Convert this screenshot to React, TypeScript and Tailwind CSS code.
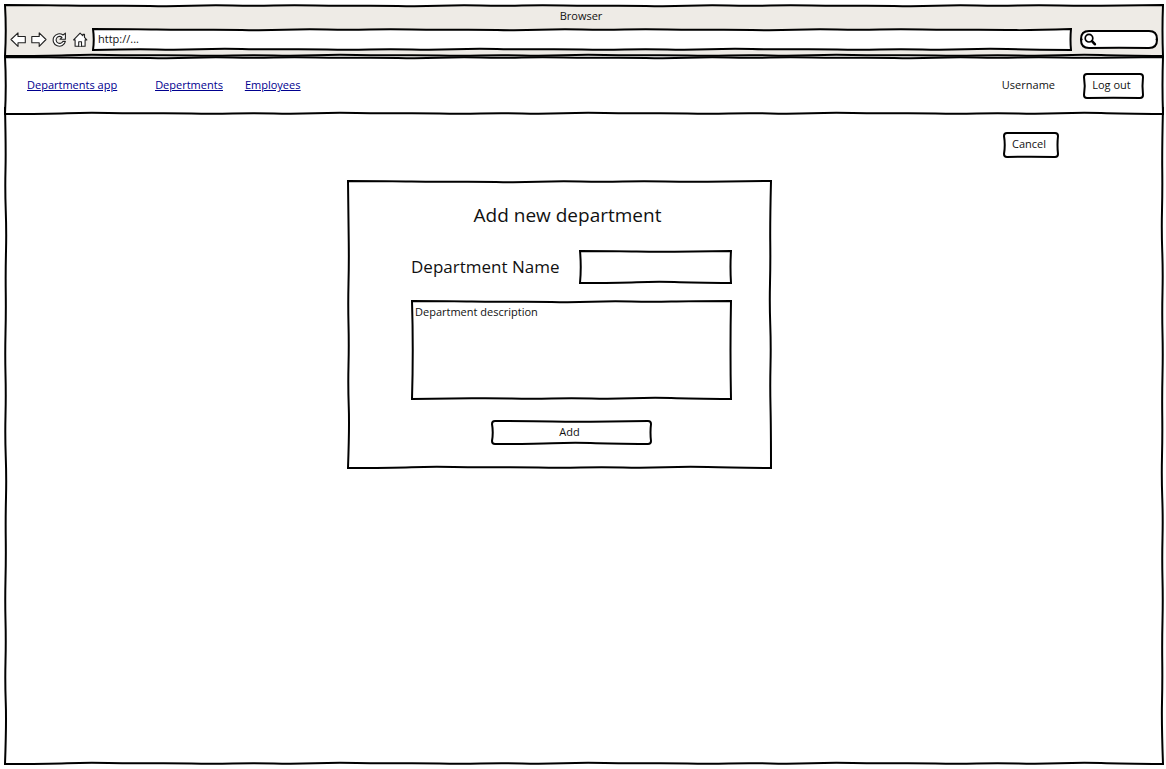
import { useLayoutEffect, useRef, useState, type ReactNode } from "react";

type Point = [number, number];

const WOBBLE = [1, 0, 1, 0.5, 1.5, 0];

/** Points of one hand-drawn edge; offsets always lean towards the inside. */
function edge(from: Point, to: Point, inward: Point, phase: number): Point[] {
  const length = Math.hypot(to[0] - from[0], to[1] - from[1]);
  const count = Math.max(2, Math.round(length / 42));
  const points: Point[] = [from];
  for (let i = 1; i < count; i++) {
    const t = i / count;
    const d = WOBBLE[(i + phase) % WOBBLE.length];
    points.push([
      from[0] + (to[0] - from[0]) * t + inward[0] * d,
      from[1] + (to[1] - from[1]) * t + inward[1] * d,
    ]);
  }
  points.push(to);
  return points;
}

function smooth(points: Point[]): string {
  let d = "";
  for (let i = 1; i < points.length - 1; i++) {
    const [x, y] = points[i];
    const next = points[i + 1];
    const last = i === points.length - 2;
    const ex = last ? next[0] : (x + next[0]) / 2;
    const ey = last ? next[1] : (y + next[1]) / 2;
    d += `Q${x} ${y} ${ex} ${ey}`;
  }
  return d;
}

function sketchPath(w: number, h: number, r: number): string {
  const a = 1;
  const right = w - 1;
  const bottom = h - 1;
  const top = edge([a + r, a], [right - r, a], [0, 1], 0);
  const east = edge([right, a + r], [right, bottom - r], [-1, 0], 1);
  const south = edge([right - r, bottom], [a + r, bottom], [0, -1], 2);
  const west = edge([a, bottom - r], [a, a + r], [1, 0], 3);
  return (
    `M${a + r} ${a}` +
    smooth(top) +
    `Q${right} ${a} ${right} ${a + r}` +
    smooth(east) +
    `Q${right} ${bottom} ${right - r} ${bottom}` +
    smooth(south) +
    `Q${a} ${bottom} ${a} ${bottom - r}` +
    smooth(west) +
    `Q${a} ${a} ${a + r} ${a}Z`
  );
}

function Outline({ radius = 0, fill = "none" }: { radius?: number; fill?: string }) {
  const ref = useRef<SVGSVGElement>(null);
  const [size, setSize] = useState({ w: 0, h: 0 });
  useLayoutEffect(() => {
    const node = ref.current;
    if (!node) return;
    const measure = () => {
      const box = node.getBoundingClientRect();
      setSize({ w: box.width, h: box.height });
    };
    measure();
    const observer = new ResizeObserver(measure);
    observer.observe(node);
    return () => observer.disconnect();
  }, []);
  return (
    <svg ref={ref} aria-hidden="true" className="pointer-events-none absolute inset-0 -z-10 size-full">
      {size.w > 0 && (
        <path d={sketchPath(size.w, size.h, radius)} fill={fill} stroke="#000" strokeWidth="2" strokeLinejoin="miter" />
      )}
    </svg>
  );
}

function SketchButton({ children, className }: { children: ReactNode; className: string }) {
  return (
    <button type="button" className={`relative isolate cursor-pointer text-[11px] ${className}`}>
      <Outline radius={3} fill="#fff" />
      {children}
    </button>
  );
}

function ToolIcon({ label, children }: { label: string; children: ReactNode }) {
  return (
    <button type="button" aria-label={label} className="size-4 cursor-pointer">
      <svg
        viewBox="0 0 16 16"
        className="size-4"
        fill="#fff"
        stroke="#222"
        strokeWidth="1.1"
        strokeLinejoin="round"
        strokeLinecap="round"
        aria-hidden="true"
      >
        {children}
      </svg>
    </button>
  );
}

function BrowserBar() {
  return (
    <header className="relative isolate pb-1.5">
      <Outline fill="#eeebe6" />
      <div className="h-6 pr-1.5 text-center text-[11px] leading-6">Browser</div>
      <div className="flex items-center pr-1.5 pl-1.5">
        <div className="flex gap-[5px] pr-[3px]">
          <ToolIcon label="Back">
            <path d="M1 7.5 8 0.8V4.5H15.3V10.8H8V14.4Z" />
          </ToolIcon>
          <ToolIcon label="Forward">
            <path d="M15 7.5 8.2 0.8V4.5H0.8V10.8H8.2V14.4Z" />
          </ToolIcon>
          <ToolIcon label="Reload">
            <path d="M11 3 13.4 1.2V7.3H8L10 5.3A3.5 3.5 0 1 0 10.8 9.4H13.4A6.2 6.2 0 1 1 11 3Z" />
          </ToolIcon>
          <ToolIcon label="Home">
            <path d="M2.1 7.9V14.2H12.1V7.9H13.8L11.5 5.4V2.4H9.9V3.8L7.1 1.1 0.6 7.9Z" />
            <path d="M5.7 14.2V9.8H8.5V14.2" />
          </ToolIcon>
        </div>
        <div className="relative isolate flex h-[23px] flex-1">
          <Outline fill="#fff" />
          <input
            aria-label="Address"
            defaultValue="http://..."
            className="min-w-0 flex-1 bg-transparent px-1.5 text-[11px] outline-none"
          />
        </div>
        <label className="relative isolate ml-2 flex h-[19px] w-[78px] items-center pl-1">
          <Outline radius={8} fill="#fff" />
          <svg viewBox="0 0 13 13" className="size-[13px] shrink-0" fill="none" stroke="#000" aria-hidden="true">
            <circle cx="5" cy="5.2" r="3.8" strokeWidth="1.7" />
            <path d="M8 8.2 10.8 11.2" strokeWidth="2.6" strokeLinecap="round" />
          </svg>
          <input aria-label="Search" className="min-w-0 flex-1 bg-transparent text-[11px] outline-none" />
        </label>
      </div>
    </header>
  );
}

function NavBar() {
  return (
    <nav className="relative isolate z-10 -mt-px flex h-[59px] items-center pr-5 pl-[23px] text-[11px]">
      <Outline fill="#fff" />
      <div className="flex flex-1 items-center text-[#00008f] underline">
        <a href="#app" className="mr-[38px]">Departments app</a>
        <a href="#departments" className="mr-[22px]">Depertments</a>
        <a href="#employees">Employees</a>
      </div>
      <span className="mr-7">Username</span>
      <SketchButton className="h-[26px] w-[61px] pr-1">Log out</SketchButton>
    </nav>
  );
}

function DepartmentForm() {
  return (
    <form className="relative isolate w-[425px] pt-5 pr-10 pb-6 pl-16">
      <Outline fill="#fff" />
      <h1 className="pr-2 text-center text-[19px] leading-[30px]">Add new department</h1>
      <div className="mt-5 flex items-center justify-between">
        <label htmlFor="department-name" className="text-[17px] leading-7">
          Department Name
        </label>
        <div className="relative isolate flex h-[34px] w-[153px]">
          <Outline fill="#fff" />
          <input id="department-name" className="min-w-0 flex-1 bg-transparent px-2 text-sm outline-none" />
        </div>
      </div>
      <div className="relative isolate mt-4 flex h-[100px]">
        <Outline fill="#fff" />
        <textarea
          aria-label="Department description"
          defaultValue="Department description"
          className="flex-1 resize-none bg-transparent px-1 py-1 text-[11px] outline-none"
        />
      </div>
      <div className="mt-5 flex justify-center">
        <SketchButton className="h-[25px] w-[161px] pr-1">Add</SketchButton>
      </div>
    </form>
  );
}

export default function App() {
  return (
    <div className="flex min-h-screen flex-col bg-white pt-1 pr-0.5 pb-1 pl-1 font-['Open_Sans','Noto_Sans',sans-serif] text-[#111]">
      <BrowserBar />
      <NavBar />
      <main className="relative isolate -mt-2 flex-1 pt-[25px]">
        <Outline />
        <div className="flex justify-end pr-[105px]">
          <SketchButton className="h-[26px] w-14 pr-1 pb-0.5">Cancel</SketchButton>
        </div>
        <div className="mt-[22px] flex justify-center pr-[49px] pb-8">
          <DepartmentForm />
        </div>
      </main>
    </div>
  );
}
